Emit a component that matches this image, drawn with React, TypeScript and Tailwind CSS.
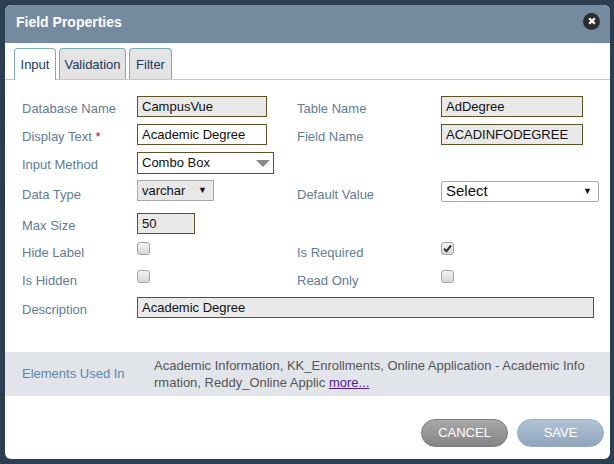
import React from "react";

const font = { fontFamily: '"Liberation Sans", Arial, sans-serif' };

function Label({ children }: { children: React.ReactNode }) {
  return <div className="text-[13px] text-[#5f7d96] pt-[3px]">{children}</div>;
}

function TextInput({ value, gray, w }: { value: string; gray?: boolean; w: string }) {
  return (
    <div
      className={`${w} h-[21px] border border-[#5e5322] px-[4px] text-[13px] leading-[20px] text-[#111] ${
        gray ? "bg-[#e9e9e9]" : "bg-white"
      }`}
    >
      {value}
    </div>
  );
}

function Checkbox({ checked }: { checked?: boolean }) {
  return (
    <div className="mt-[-6px] w-[13px] h-[13px] rounded-[3px] border border-[#a3a3a3] bg-gradient-to-b from-[#f4f4f4] to-[#d8d8d8] flex items-center justify-center">
      {checked && (
        <svg width="9" height="9" viewBox="0 0 9 9">
          <path d="M1 4.8 L3.4 7.2 L8 1.5" fill="none" stroke="#333" strokeWidth="2" />
        </svg>
      )}
    </div>
  );
}

export default function App() {
  return (
    <div className="w-[614px] h-[464px] bg-[#2b3e52] pl-[5px] pt-[5px] pr-[4px] pb-[5px]" style={font}>
      <div className="h-full bg-white rounded-[6px] overflow-hidden flex flex-col">
        {/* header */}
        <div className="h-[38px] bg-[#738a9f] flex items-center justify-between pl-[11px] pr-[10px] shrink-0">
          <span className="text-white font-bold text-[14px] mt-[-4px]">Field Properties</span>
          <div className="w-[17px] h-[17px] rounded-full bg-[#2d2d2d] flex items-center justify-center mt-[-6px]">
            <svg width="8" height="8" viewBox="0 0 8 8">
              <path d="M1.2 1.2 L6.8 6.8 M6.8 1.2 L1.2 6.8" stroke="white" strokeWidth="2.2" />
            </svg>
          </div>
        </div>

        {/* tabs */}
        <div className="mt-[6px] flex items-end gap-[3px] pl-[9px] border-b border-[#c9c9c9] h-[31px] shrink-0">
          <div className="w-[42px] h-[32px] mb-[-1px] pt-[1px] bg-white border border-b-0 border-[#7ab0b3] rounded-t-[4px] flex items-center justify-center text-[13px] text-[#1d3a5c]">
            Input
          </div>
          <div className="w-[67px] h-[31px] pt-[1px] bg-[#e3e3e3] border border-b-0 border-[#7ab0b3] rounded-t-[4px] flex items-center justify-center text-[13px] text-[#1d3a5c]">
            Validation
          </div>
          <div className="w-[43px] h-[31px] pt-[1px] bg-[#e3e3e3] border border-b-0 border-[#7ab0b3] rounded-t-[4px] flex items-center justify-center text-[13px] text-[#1d3a5c]">
            Filter
          </div>
        </div>

        {/* form */}
        <div className="grid grid-cols-[115px_160px_144px_1fr] pl-[17px] pt-[16px] auto-rows-[28px] items-start">
          <Label>Database Name</Label>
          <TextInput value="CampusVue" gray w="w-[130px]" />
          <Label>Table Name</Label>
          <TextInput value="AdDegree" gray w="w-[142px]" />

          <Label>
            Display Text <span className="text-[#c00]">*</span>
          </Label>
          <TextInput value="Academic Degree" w="w-[130px]" />
          <Label>Field Name</Label>
          <TextInput value="ACADINFODEGREE" gray w="w-[142px]" />

          <Label>Input Method</Label>
          <div className="w-[137px] h-[22px] border border-[#5e5322] bg-white flex items-center justify-between pl-[4px] pr-[3px] text-[13px] text-[#111]">
            <span>Combo Box</span>
            <svg width="14" height="7" viewBox="0 0 14 7">
              <path d="M0 0 H14 L7 7 Z" fill="#8a8a8a" />
            </svg>
          </div>
          <div />
          <div />

          <div className="pt-[2px]">
            <Label>Data Type</Label>
          </div>
          <div className="w-[77px] h-[21px] border border-[#a9a9a9] bg-[#e8e8e8] flex items-center justify-between pl-[4px] pr-[6px] text-[13px] text-[#111]">
            <span>varchar</span>
            <span className="text-[9px]">▼</span>
          </div>
          <div className="pt-[2px]">
            <Label>Default Value</Label>
          </div>
          <div className="w-[158px] h-[21px] mt-[1px] border border-[#a9a9a9] rounded-[2px] bg-white flex items-center justify-between pl-[4px] pr-[6px] text-[15px] text-[#111]">
            <span>Select</span>
            <span className="text-[9px]">▼</span>
          </div>
        </div>

        <div className="grid grid-cols-[115px_160px_144px_1fr] pl-[17px] mt-[5px] auto-rows-[28px] items-start">
          <Label>Max Size</Label>
          <TextInput value="50" gray w="w-[58px]" />
          <div />
          <div />

          <div className="flex items-center h-[21px]">
            <Label>Hide Label</Label>
          </div>
          <div className="flex items-center h-[21px]">
            <Checkbox />
          </div>
          <div className="flex items-center h-[21px]">
            <Label>Is Required</Label>
          </div>
          <div className="flex items-center h-[21px]">
            <Checkbox checked />
          </div>

          <div className="flex items-center h-[21px]">
            <Label>Is Hidden</Label>
          </div>
          <div className="flex items-center h-[21px]">
            <Checkbox />
          </div>
          <div className="flex items-center h-[21px]">
            <Label>Read Only</Label>
          </div>
          <div className="flex items-center h-[21px]">
            <Checkbox />
          </div>

          <Label>Description</Label>
          <div className="col-span-3">
            <TextInput value="Academic Degree" gray w="w-[457px]" />
          </div>
        </div>

        {/* elements used in */}
        <div className="mt-[27px] h-[44px] bg-[#e1e5ea] flex items-center pl-[17px] shrink-0">
          <div className="w-[132px] text-[13px] text-[#5b86b0] shrink-0">Elements Used In</div>
          <div className="w-[431px] text-[13px] leading-[17px] text-[#555] break-all">
            Academic Information, KK_Enrollments, Online Application - Academic Information, Reddy_Online Applic{" "}
            <span className="text-[#551a8b] underline">more...</span>
          </div>
        </div>

        {/* footer */}
        <div className="flex-1 flex items-end justify-end gap-[9px] pr-[6px] pb-[12px]">
          <button className="w-[87px] h-[28px] rounded-full border border-[#7d7d7d] bg-gradient-to-b from-[#a8a8a8] to-[#858585] text-white text-[13px]">
            CANCEL
          </button>
          <button className="w-[87px] h-[28px] rounded-full border border-[#9aaec2] bg-gradient-to-b from-[#b2c4d6] to-[#8ea5bc] text-white text-[13px]">
            SAVE
          </button>
        </div>
      </div>
    </div>
  );
}
